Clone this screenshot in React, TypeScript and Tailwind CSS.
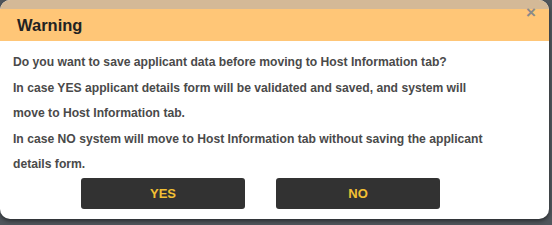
export default function App() {
  const body = "font-['Liberation_Sans',Arial,sans-serif]";
  return (
    <div className="w-[552px] h-[225px] overflow-hidden bg-[#50565c] relative">
      <div className="w-[549px] h-[219px] bg-white rounded-[10px] overflow-hidden flex flex-col shadow-[0_2px_4px_rgba(0,0,0,0.5)]">
        <div className="h-[9px] bg-[#d4b997] shrink-0" />
        <div className={`h-[32px] bg-[#ffc677] flex items-center pl-[17px] ${body}`}>
          <span className="text-[16.5px] font-bold text-[#222] leading-none">Warning</span>
        </div>
        <div className={`pl-[13px] pt-[9px] text-[12.15px] font-bold text-[#4a4a4a] leading-[25.6px] ${body}`}>
          <div>Do you want to save applicant data before moving to Host Information tab?</div>
          <div>In case YES applicant details form will be validated and saved, and system will</div>
          <div>move to Host Information tab.</div>
          <div>In case NO system will move to Host Information tab without saving the applicant</div>
          <div>details form.</div>
        </div>
        <div className={`flex gap-[31px] pl-[81px] mt-[0px] ${body}`}>
          <button className="w-[164px] h-[31px] bg-[#323232] rounded-[3px] text-[#f2c034] text-[13px] font-bold">YES</button>
          <button className="w-[164px] h-[31px] bg-[#323232] rounded-[3px] text-[#f2c034] text-[13px] font-bold">NO</button>
        </div>
      </div>
      <span className={`absolute left-[526px] top-[4px] text-[17px] font-bold text-[#8a8a8a] leading-none ${body}`}>×</span>
    </div>
  );
}
